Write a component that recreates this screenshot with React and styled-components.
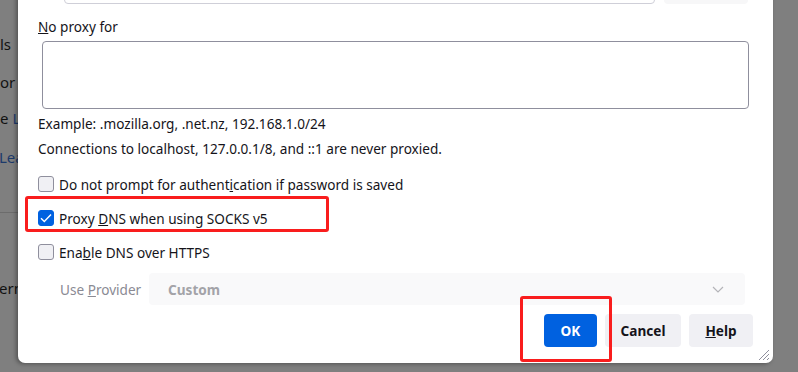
import React from 'react'
import styled, { createGlobalStyle } from 'styled-components'

const GlobalStyle = createGlobalStyle`
  html, body {
    margin: 0;
    padding: 0;
    background: #7f7f7f;
    overflow: hidden;
  }
  body {
    font-family: "Noto Sans", "Open Sans", sans-serif;
  }
`;

const Page = styled.div`
  position: relative;
  display: flex;
  align-items: flex-start;
  width: 798px;
  height: 372px;
  overflow: hidden;
  background: #7f7f7f;
`;

const Backdrop = styled.div`
  width: 18px;
  flex: none;
  display: flex;
  flex-direction: column;
  overflow: hidden;
  white-space: nowrap;
  font-size: 15px;
  line-height: 20px;
  color: #121212;
`;

const BackLine = styled.div`
  margin-top: ${props => props.top || 0}px;
  margin-left: ${props => props.shift || 0}px;
  color: ${props => props.link ? "#1c3a6b" : "#121212"};
`;

const BackRule = styled.div`
  margin-top: ${props => props.top || 0}px;
  height: 1px;
  width: 100%;
  background: #6c6c6c;
`;

const Dialog = styled.div`
  position: relative;
  width: 755px;
  flex: none;
  margin-top: -30px;
  height: 393px;
  box-sizing: border-box;
  display: flex;
  flex-direction: column;
  padding: 0 20px 16px 20px;
  background: #fff;
  border-radius: 0 0 7px 7px;
  box-shadow: -2px 1px 4px rgba(0, 0, 0, 0.35);
  color: #15141a;
  font-size: 13.6px;
`;

const TopRow = styled.div`
  display: flex;
  align-items: flex-end;
  height: 34px;
  padding-left: 26px;
  gap: 9px;
`;

const UrlInput = styled.div`
  width: 591px;
  height: 34px;
  box-sizing: border-box;
  border: 1px solid #cfcfd8;
  border-radius: 4px;
`;

const ReloadButton = styled.div`
  width: 84px;
  height: 33px;
  border-radius: 4px;
  background: #f7f7f8;
`;

const Label = styled.div`
  margin-top: ${props => props.top || 0}px;
  line-height: 18px;
  white-space: nowrap;
`;

const TextArea = styled.div`
  margin: 5px 0 0 4px;
  width: 707px;
  height: 68px;
  box-sizing: border-box;
  border: 1px solid #8f8f9d;
  border-radius: 4px;
`;

const CheckRow = styled.label`
  display: flex;
  align-items: center;
  gap: 5px;
  height: 20px;
  margin-top: ${props => props.top || 0}px;
  white-space: nowrap;
`;

const Box = styled.span`
  width: 16px;
  height: 16px;
  box-sizing: border-box;
  border-radius: 3px;
  display: flex;
  align-items: center;
  justify-content: center;
  border: 1px solid ${props => props.checked ? "#0061e0" : "#8f8f9d"};
  background: ${props => props.checked ? "#0061e0" : "#f0f0f4"};
`;

const ProviderRow = styled.div`
  display: flex;
  align-items: center;
  margin-top: 11px;
  padding-left: 22px;
  gap: 8px;
  height: 32px;
`;

const ProviderLabel = styled.span`
  width: 81px;
  color: #8a8a93;
  white-space: nowrap;
`;

const Select = styled.div`
  width: 596px;
  height: 32px;
  box-sizing: border-box;
  display: flex;
  align-items: center;
  justify-content: space-between;
  padding: 0 21px 0 19px;
  border-radius: 4px;
  background: #f9f9fa;
  color: #a3a3a8;
  font-weight: 700;
`;

const ButtonRow = styled.div`
  display: flex;
  justify-content: flex-end;
  gap: 8px;
  margin-top: 9px;
`;

const Button = styled.div`
  width: ${props => props.width}px;
  height: 33px;
  display: flex;
  align-items: center;
  justify-content: center;
  border-radius: 4px;
  font-weight: 700;
  background: ${props => props.primary ? "#0061e0" : "#f0f0f4"};
  color: ${props => props.primary ? "#fff" : "#15141a"};
`;

const Grip = styled.svg`
  position: absolute;
  right: 3px;
  bottom: 2px;
`;

const Mark = styled.div`
  position: absolute;
  left: ${props => props.x}px;
  top: ${props => props.y}px;
  width: ${props => props.w}px;
  height: ${props => props.h}px;
  box-sizing: border-box;
  border: 3px solid #f91d1d;
  border-radius: 3px;
  pointer-events: none;
`;

function Check() {
  return (
    <svg width="12" height="10" viewBox="0 0 12 10">
      <path d="M1 5.2 L4.3 8.4 L11 1.4" fill="none" stroke="#fff" strokeWidth="1.4" />
    </svg>
  )
}

function App() {
  return (
    <Page>
      <GlobalStyle />
      <Backdrop>
        <BackLine top={34}>ls</BackLine>
        <BackLine top={18}>or v</BackLine>
        <BackLine top={16}>e <span style={{ color: "#1c3a6b" }}>L</span></BackLine>
        <BackLine top={19} shift={-1} link>Lea</BackLine>
        <BackRule top={45} />
        <BackLine top={65} shift={-1}>ern</BackLine>
      </Backdrop>

      <Dialog>
        <TopRow>
          <UrlInput />
          <ReloadButton />
        </TopRow>

        <Label top={14}><u>N</u>o proxy for</Label>
        <TextArea />

        <Label top={6}>Example: .mozilla.org, .net.nz, 192.168.1.0/24</Label>
        <Label top={7}>Connections to localhost, 127.0.0.1/8, and ::1 are never proxied.</Label>

        <CheckRow top={16}>
          <Box />
          <span>Do not prompt for authent<u>i</u>cation if password is saved</span>
        </CheckRow>
        <CheckRow top={14}>
          <Box checked><Check /></Box>
          <span>Proxy <u>D</u>NS when using SOCKS v5</span>
        </CheckRow>
        <CheckRow top={14}>
          <Box />
          <span>Ena<u>b</u>le DNS over HTTPS</span>
        </CheckRow>

        <ProviderRow>
          <ProviderLabel>Use <u>P</u>rovider</ProviderLabel>
          <Select>
            <span>Custom</span>
            <svg width="12" height="7" viewBox="0 0 12 7">
              <path d="M1 1 L6 6 L11 1" fill="none" stroke="#b4b4b8" strokeWidth="1.2" />
            </svg>
          </Select>
        </ProviderRow>

        <ButtonRow>
          <Button primary width={53}>OK</Button>
          <Button width={76}>Cancel</Button>
          <Button width={64}><span><u>H</u>elp</span></Button>
        </ButtonRow>

        <Grip width="13" height="13" viewBox="0 0 13 13">
          <path d="M12 2 L2 12 M12 6 L6 12 M12 10 L10 12" stroke="#8f8f9d" strokeWidth="1" />
        </Grip>
      </Dialog>

      <Mark x={25} y={196} w={304} h={36} />
      <Mark x={520} y={296} w={92} h={66} />
    </Page>
  )
}

export default App
